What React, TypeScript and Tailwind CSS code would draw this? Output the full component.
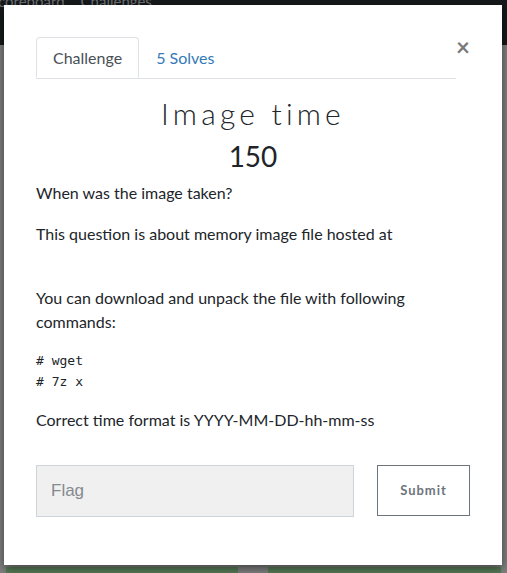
import React from 'react'

export default function App() {
  return (
    <div
      className="relative w-[507px] h-[573px] overflow-hidden bg-[#7f7f7f]"
      style={{ fontFamily: 'Lato, "Open Sans", sans-serif' }}
    >
      {/* dimmed page behind the modal */}
      <div className="h-[45px] bg-[#16191b] text-[#6f7275] text-[15px] flex gap-4 leading-none">
        <span className="-ml-[2px] -mt-[6px]">coreboard</span>
        <span className="-mt-[6px]">Challenges</span>
      </div>
      <div className="absolute left-[6px] top-[94px] w-[3px] h-[22px] bg-[#3a1608]" />
      <div className="absolute left-[6px] right-[6px] top-[567px] h-[10px] flex gap-[30px]">
        <div className="w-[232px] bg-[#567a55]" />
        <div className="flex-1 bg-[#567a55]" />
      </div>

      {/* modal */}
      <div className="absolute left-[4px] top-[5px] w-[498px] h-[560px] bg-white shadow-[0_3px_9px_rgba(0,0,0,0.5)] px-[32px] pt-[32px]">
        <div className="flex items-start">
          <div className="flex-1 flex border-b border-[#dee2e6]">
            <div className="px-[16px] h-[41px] flex items-center border border-[#dee2e6] border-b-white -mb-px rounded-t-[4px] text-[16px] text-[#495057]">
              Challenge
            </div>
            <div className="pl-[17px] h-[41px] flex items-center text-[16px] text-[#337ab7]">5 Solves</div>
          </div>
          <button className="w-[14px] -mt-[2px] text-[#7a7a7a] text-[24px] font-bold leading-none">
            ×
          </button>
        </div>

        <h3 className="text-center text-[30px] font-light text-[#212529] tracking-[4.2px] mt-[16px] leading-[36px]">
          Image time
        </h3>
        <h4 className="text-center text-[28px] text-[#212529] leading-[34px] mt-[8px]">150</h4>

        <div className="text-[16px] text-[#212529] leading-[24px] mt-[8px]">
          <p>When was the image taken?</p>
          <p className="mt-[17px]">This question is about memory image file hosted at</p>
          <p className="mt-[40px]">You can download and unpack the file with following commands:</p>
          <pre
            className="mt-[16px] text-[13px] leading-[21px] text-[#212529]"
            style={{ fontFamily: '"DejaVu Sans Mono", monospace' }}
          >
            {'# wget\n# 7z x'}
          </pre>
          <p className="mt-[16px]">Correct time format is YYYY-MM-DD-hh-mm-ss</p>
        </div>

        <div className="flex mt-[33px] gap-[23px]">
          <input
            placeholder="Flag"
            className="w-[318px] h-[52px] bg-[#f0f0f0] border border-[#ced4da] px-[14px] text-[17px] text-[#495057] placeholder:text-[#858a8f] outline-none"
            style={{ fontFamily: '"Liberation Sans", Arial, sans-serif' }}
          />
          <button className="w-[93px] h-[51px] border border-[#6c757d] text-[#6c757d] text-[13px] font-bold tracking-[1px]">
            Submit
          </button>
        </div>
      </div>
    </div>
  )
}
